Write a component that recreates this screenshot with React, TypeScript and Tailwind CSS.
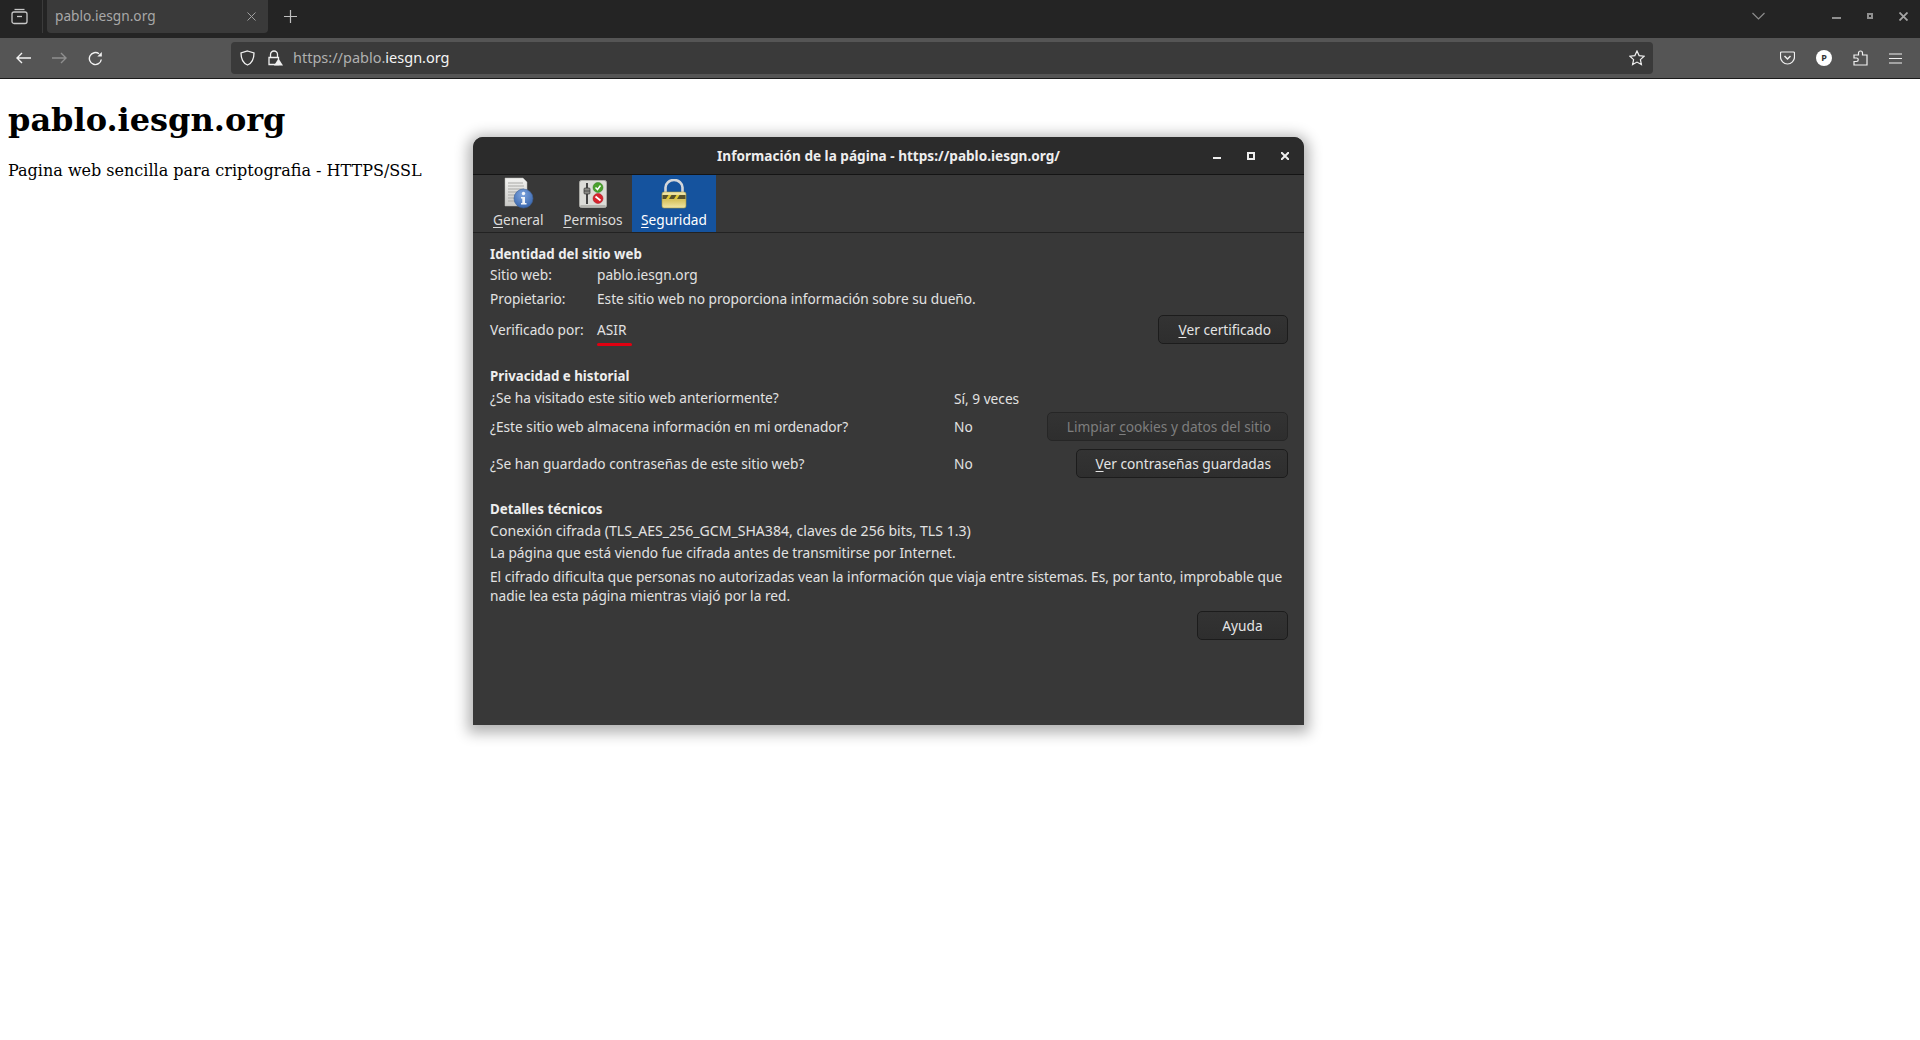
import React from "react";

const ui = "font-['Noto_Sans','Liberation_Sans',sans-serif]";

function U({ children }: { children: React.ReactNode }) {
  return <span className="underline underline-offset-2 decoration-1">{children}</span>;
}

function Btn({ children, w, disabled, center }: { children: React.ReactNode; w: string; disabled?: boolean; center?: boolean }) {
  return (
    <div
      className={`h-[29px] ${w} flex items-center ${center ? "justify-center" : "justify-end pr-[16px]"} rounded-[5px] border border-[#1c1c1c] bg-[linear-gradient(#333333,#2e2e2e)] text-[13.7px] shrink-0 ${
        disabled ? "text-[#7e7e7e] border-[#262626]" : "text-[#e4e4e4]"
      }`}
    >
      <span>{children}</span>
    </div>
  );
}

function GeneralIcon() {
  return (
    <svg width="32" height="32" viewBox="0 0 32 32">
      <defs>
        <linearGradient id="pg" x1="0" y1="0" x2="0" y2="1">
          <stop offset="0" stopColor="#f2f2f0" />
          <stop offset="1" stopColor="#c9c9c6" />
        </linearGradient>
        <radialGradient id="bl" cx="0.45" cy="0.3" r="0.8">
          <stop offset="0" stopColor="#7fa5de" />
          <stop offset="1" stopColor="#2f5ea8" />
        </radialGradient>
      </defs>
      <path d="M2 1h18l4 4v24H2z" fill="url(#pg)" stroke="#b5b5b2" strokeWidth="0.5" />
      <path d="M5 6h15M5 9h16M5 12h16M5 15h13M5 18h11M5 21h10M5 24h10" stroke="#a9a9a6" strokeWidth="1" />
      <circle cx="20.5" cy="21.5" r="9.5" fill="url(#bl)" stroke="#3c6096" strokeWidth="0.6" />
      <circle cx="20.5" cy="16.5" r="1.7" fill="#f2f5fa" />
      <path d="M18 20h4v6h1.5v1.5h-5.5V26h1.300v-4.500H18z" fill="#f2f5fa" />
    </svg>
  );
}

function PermIcon() {
  return (
    <svg width="28" height="28" viewBox="0 0 28 28">
      <rect x="0.500" y="0.500" width="27" height="27" rx="2" fill="#dcdcd8" stroke="#a8a8a4" />
      <rect x="1.500" y="25" width="25" height="2" fill="#b5b5b0" />
      <path d="M8 3v21" stroke="#444" strokeWidth="2" />
      <rect x="5" y="8" width="6" height="6" rx="1" fill="#8a8a86" stroke="#333" strokeWidth="0.7" />
      <path d="M5 11h6" stroke="#333" strokeWidth="0.7" />
      <circle cx="19" cy="7.500" r="5" fill="#4aa02c" stroke="#2f7a1d" strokeWidth="0.5" />
      <path d="M16.500 7.500l2 2 3-4" stroke="#fff" strokeWidth="1.500" fill="none" />
      <circle cx="19" cy="18.500" r="5" fill="#d7232d" stroke="#a01a20" strokeWidth="0.5" />
      <path d="M16.500 16.500l5 4" stroke="#fff" strokeWidth="1.800" />
    </svg>
  );
}

function LockIcon() {
  return (
    <svg width="26" height="30" viewBox="0 0 26 30">
      <defs>
        <linearGradient id="gd" x1="0" y1="0" x2="0" y2="1">
          <stop offset="0" stopColor="#f4ecb4" />
          <stop offset="0.5" stopColor="#d6c25e" />
          <stop offset="1" stopColor="#f0e6a6" />
        </linearGradient>
      </defs>
      <path d="M4.500 14V8.500a8.500 7.500 0 0 1 17 0V14" fill="none" stroke="#d3d6da" strokeWidth="2.600" />
      <rect x="1" y="13" width="24" height="16" rx="2" fill="url(#gd)" stroke="#a8983e" strokeWidth="0.6" />
      <rect x="1.500" y="16" width="23" height="4" fill="#57522c" />
      <path d="M5 20l2.500-4h3L8 20zM13 20l2.500-4h3L16 20z" fill="#e0c935" />
    </svg>
  );
}

export default function App() {
  return (
    <div className="relative w-[1920px] h-[1040px] overflow-hidden bg-white">
      <div className={`${ui} h-[38px] bg-[#242424] flex items-start`}>
        <div className="w-[43px] h-[33px] pr-[3px] flex items-center justify-center border-r border-[#3b3b3b]">
          <svg width="17" height="17" viewBox="0 0 17 17" fill="none" stroke="#c8c8c8" strokeWidth="1.300">
            <path d="M3.500 1.500h10" />
            <rect x="1" y="4" width="15" height="11.500" rx="2" />
            <path d="M6 8.500h5" />
          </svg>
        </div>
        <div className="ml-[4px] w-[221px] h-[33px] rounded-b-[4px] bg-[#3a3a3a] flex items-center pl-[8px] pr-[12px] text-[13.7px] text-[#a8a8a8]">
          <span className="flex-1">pablo.iesgn.org</span>
          <svg width="9" height="9" viewBox="0 0 9 9" stroke="#a0a0a0" strokeWidth="1">
            <path d="M.5.500l8 8M8.500.500l-8 8" />
          </svg>
        </div>
        <div className="ml-[16px] h-[33px] flex items-center">
          <svg width="13" height="13" viewBox="0 0 13 13" stroke="#c0c0c0" strokeWidth="1.200">
            <path d="M6.500 0v13M0 6.500h13" />
          </svg>
        </div>
        <div className="flex-1" />
        <div className="h-[32px] flex items-center mr-[67px]">
          <svg width="13" height="8" viewBox="0 0 13 8" fill="none" stroke="#8c8c8c" strokeWidth="1.200">
            <path d="M.5 1l6 6 6-6" />
          </svg>
        </div>
        <div className="h-[32px] flex items-center gap-[26px] mr-[12px]">
          <div className="w-[9px] h-[2px] mt-[4px] bg-[#8f8f8f]" />
          <div className="w-[6px] h-[6px] border-2 border-[#8f8f8f]" />
          <svg width="9" height="9" viewBox="0 0 9 9" stroke="#a5a5a5" strokeWidth="1.800">
            <path d="M.5.500l8 8M8.500.500l-8 8" />
          </svg>
        </div>
      </div>

      <div className={`${ui} h-[41px] bg-[#555555] border-b border-[#1a1a1a] flex items-center`}>
        <div className="w-[231px] flex items-center pl-[16px] gap-[21px] shrink-0">
          <svg width="15" height="12" viewBox="0 0 15 12" fill="none" stroke="#f2f2f2" strokeWidth="1.400">
            <path d="M15 6H1M6 1L1 6l5 5" />
          </svg>
          <svg width="15" height="12" viewBox="0 0 15 12" fill="none" stroke="#8f8f8f" strokeWidth="1.400">
            <path d="M0 6h14M9 1l5 5-5 5" />
          </svg>
          <svg width="15" height="15" viewBox="0 0 15 15" fill="none" stroke="#f2f2f2" strokeWidth="1.400">
            <path d="M13.300 8.500A6 6 0 1 1 11 2.800" />
            <path d="M13.800 1v4.500H9.300z" fill="#f2f2f2" stroke="none" />
          </svg>
        </div>
        <div className="w-[1422px] h-[32px] rounded-[4px] bg-[#3a3a3a] flex items-center pl-[9px] pr-[8px] shrink-0">
          <svg width="15" height="16" viewBox="0 0 15 16" fill="none" stroke="#f0f0f0" strokeWidth="1.300">
            <path d="M7.500 1L14 3c0 6-1.500 10-6.500 12C2.500 13 1 9 1 3z" />
          </svg>
          <svg className="ml-[12px]" width="16" height="16" viewBox="0 0 16 16" fill="none">
            <path d="M3.500 7V4.500a3.500 3.500 0 0 1 7 0V7" stroke="#f0f0f0" strokeWidth="1.300" />
            <path d="M2 7.500h9.500v7H2z" stroke="#f0f0f0" strokeWidth="1.300" />
            <path d="M11.500 8.500l4.500 7H7z" fill="#f0f0f0" />
          </svg>
          <span className="ml-[10px] text-[14.5px] text-[#b0b0b0]">
            https://pablo.<span className="text-[#f4f4f4]">iesgn.org</span>
          </span>
          <div className="flex-1" />
          <svg width="16" height="16" viewBox="0 0 16 16" fill="none" stroke="#f0f0f0" strokeWidth="1.200">
            <path d="M8 1l2.100 4.600 5 .6-3.700 3.400 1 5L8 12.100 3.600 14.600l1-5L.9 6.200l5-.6z" />
          </svg>
        </div>
        <div className="flex-1 flex items-center justify-end gap-[21px] pr-[18px]">
          <svg width="15" height="14" viewBox="0 0 15 14" fill="none" stroke="#f0f0f0" strokeWidth="1.200">
            <path d="M1.500 1h12a1 1 0 0 1 1 1v4a7 7 0 0 1-14 0V2a1 1 0 0 1 1-1z" />
            <path d="M4.500 5l3 3 3-3" strokeWidth="1.500" />
          </svg>
          <div className="w-[16px] h-[16px] rounded-full bg-white flex items-center justify-center text-[9px] font-bold text-[#333]">
            P
          </div>
          <svg width="15" height="16" viewBox="0 0 15 16" fill="none" stroke="#f0f0f0" strokeWidth="1.200">
            <path d="M1 15V11.500h2.500a1.500 1.500 0 0 0 0-3.500H1V5h4.500V3a2 2 0 0 1 4 0v2H14v10z" />
          </svg>
          <svg width="13" height="11" viewBox="0 0 13 11" stroke="#f0f0f0" strokeWidth="1.200">
            <path d="M0 1h13M0 5.500h13M0 10h13" />
          </svg>
        </div>
      </div>

      <div className="font-['DejaVu_Serif',serif] text-black pl-[8px]">
        <h1 className="text-[32px] font-bold leading-[38px] mt-[22px]">pablo.iesgn.org</h1>
        <p className="text-[16px] leading-[19px] mt-[22px]">Pagina web sencilla para criptografia - HTTPS/SSL</p>
      </div>

      <div
        className={`${ui} absolute left-[473px] top-[137px] w-[831px] h-[588px] bg-[#383838] rounded-t-[10px] shadow-[0_3px_14px_5px_rgba(0,0,0,0.3)] text-[13.7px] leading-[19px] text-[#e2e2e2] flex flex-col`}
      >
        <div className="h-[38px] shrink-0 bg-[#2b2b2b] border-b border-[#141414] rounded-t-[10px] flex items-center relative">
          <div className="flex-1 text-center font-bold text-[#eeeeee] text-[13.6px]">
            Información de la página - https://pablo.iesgn.org/
          </div>
          <div className="absolute right-[15px] top-0 h-[37px] flex items-center gap-[26px]">
            <div className="w-[8px] h-[2px] mt-[5px] bg-[#eeeeee]" />
            <div className="w-[8px] h-[8px] border-2 border-[#eeeeee]" />
            <svg width="8" height="8" viewBox="0 0 8 8" stroke="#eeeeee" strokeWidth="2">
              <path d="M0 0l8 8M8 0L0 8" />
            </svg>
          </div>
        </div>

        <div className="h-[58px] shrink-0 border-b border-[#222222] flex items-stretch pl-[7px] text-[#dcdcdc]">
          <div className="w-[74px] relative flex flex-col items-center">
            <div className="h-[36px] mt-[2px] ml-[4px]"><GeneralIcon /></div>
            <span className="absolute top-[35px] left-[13px]"><U>G</U>eneral</span>
          </div>
          <div className="w-[78px] flex flex-col items-center relative">
            <div className="h-[28px] mt-[5px]"><PermIcon /></div>
            <span className="absolute top-[35px] left-0 w-full text-center"><U>P</U>ermisos</span>
          </div>
          <div className="w-[84px] bg-[#15539e] flex flex-col items-center relative text-white">
            <div className="mt-[4px]"><LockIcon /></div>
            <span className="absolute top-[35px] left-0 w-full text-center"><U>S</U>eguridad</span>
          </div>
        </div>

        <div className="flex-1 pl-[17px] pr-[16px] pt-[12px] flex flex-col">
          <div className="font-bold h-[19px] text-[13.3px] text-[#eeeeee]">Identidad del sitio web</div>
          <div className="flex mt-[1px] h-[19px]">
            <div className="w-[107px]">Sitio web:</div>
            <div>pablo.iesgn.org</div>
          </div>
          <div className="flex mt-[5px] h-[19px]">
            <div className="w-[107px]">Propietario:</div>
            <div>Este sitio web no proporciona información sobre su dueño.</div>
          </div>
          <div className="flex items-center justify-between mt-[2px] h-[38px] relative">
            <div className="flex mt-[1px]">
              <div className="w-[107px]">Verificado por:</div>
              <div>ASIR</div>
            </div>
            <div className="absolute left-[107px] top-[33px] w-[35px] h-[3px] rounded-full bg-[#e00010]" />
            <Btn w="w-[130px]">
              <U>V</U>er certificado
            </Btn>
          </div>

          <div className="font-bold h-[19px] mt-[19px] text-[13.3px] text-[#eeeeee]">Privacidad e historial</div>
          <div className="flex mt-[2px] h-[19px]">
            <div className="w-[464px]">¿Se ha visitado este sitio web anteriormente?</div>
            <div className="mt-[1px]">Sí, 9 veces</div>
          </div>
          <div className="flex items-center mt-[5px] h-[29px]">
            <div className="w-[464px]">¿Este sitio web almacena información en mi ordenador?</div>
            <div>No</div>
            <div className="flex-1" />
            <Btn w="w-[241px]" disabled>
              Limpiar <U>c</U>ookies y datos del sitio
            </Btn>
          </div>
          <div className="flex items-center mt-[8px] h-[29px]">
            <div className="w-[464px]">¿Se han guardado contraseñas de este sitio web?</div>
            <div>No</div>
            <div className="flex-1" />
            <Btn w="w-[212px]">
              <U>V</U>er contraseñas guardadas
            </Btn>
          </div>

          <div className="font-bold h-[19px] mt-[22px] text-[13.3px] text-[#eeeeee]">Detalles técnicos</div>
          <div className="h-[19px] mt-[2px] text-[14.1px]">Conexión cifrada (TLS_AES_256_GCM_SHA384, claves de 256 bits, TLS 1.3)</div>
          <div className="h-[19px] mt-[3px]">La página que está viendo fue cifrada antes de transmitirse por Internet.</div>
          <div className="mt-[5px] leading-[19px]">
            El cifrado dificulta que personas no autorizadas vean la información que viaja entre sistemas. Es, por tanto, improbable que
            <br />
            nadie lea esta página mientras viajó por la red.
          </div>
          <div className="flex justify-end mt-[6px]">
            <Btn w="w-[91px]" center>Ayuda</Btn>
          </div>
        </div>
      </div>
    </div>
  );
}
